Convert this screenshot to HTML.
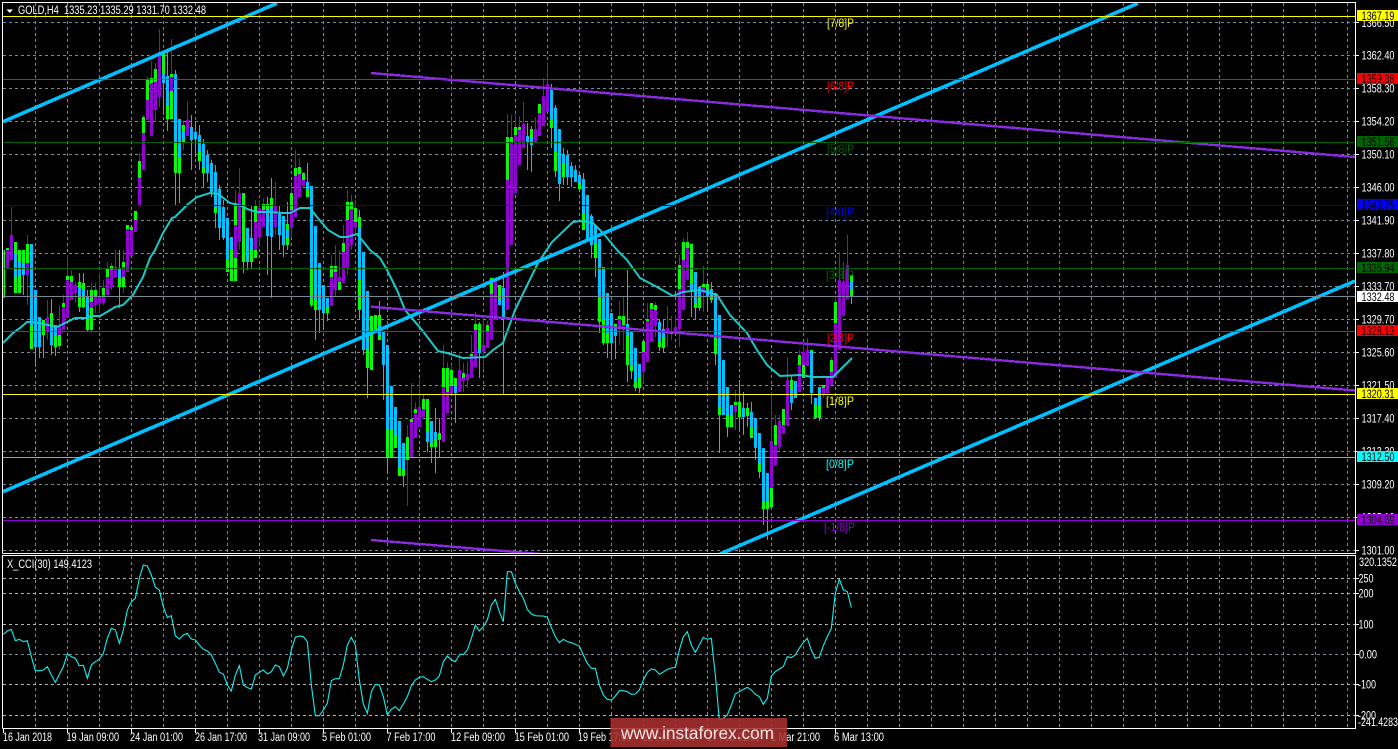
<!DOCTYPE html>
<html>
<head>
<meta charset="utf-8">
<title>GOLD,H4</title>
<style>
html,body{margin:0;padding:0;background:#000;width:1398px;height:749px;overflow:hidden}
svg{display:block}
text{font-family:"Liberation Sans",sans-serif;font-size:11.5px;fill:#fff}
.b text{fill:#000}
</style>
</head>
<body>
<svg width="1398" height="749" viewBox="0 0 1398 749" xmlns="http://www.w3.org/2000/svg">
<defs>
<clipPath id="m"><rect x="3" y="3" width="1352" height="550"/></clipPath>
</defs>
<rect width="1398" height="749" fill="#000"/>

<!-- grid main -->
<g shape-rendering="crispEdges" fill="none" stroke="#778899" stroke-width="1" stroke-dasharray="3 3">
<path d="M3 22.5H1355M3 55.5H1355M3 88.5H1355M3 121.5H1355M3 154.5H1355M3 187.5H1355M3 220.5H1355M3 253.5H1355M3 286.5H1355M3 319.5H1355M3 352.5H1355M3 385.5H1355M3 418.5H1355M3 451.5H1355M3 484.5H1355M3 517.5H1355M3 550.5H1355"/>
<path id="vg" d="M35.5 3V553M67.5 3V553M99.5 3V553M131.5 3V553M163.5 3V553M195.5 3V553M227.5 3V553M259.5 3V553M291.5 3V553M323.5 3V553M355.5 3V553M387.5 3V553M419.5 3V553M451.5 3V553M483.5 3V553M515.5 3V553M547.5 3V553M579.5 3V553M611.5 3V553M643.5 3V553M675.5 3V553M707.5 3V553M739.5 3V553M771.5 3V553M803.5 3V553M835.5 3V553M867.5 3V553M899.5 3V553M931.5 3V553M963.5 3V553M995.5 3V553M1027.5 3V553M1059.5 3V553M1091.5 3V553M1123.5 3V553M1155.5 3V553M1187.5 3V553M1219.5 3V553M1251.5 3V553M1283.5 3V553M1315.5 3V553M1347.5 3V553"/>
<path d="M35.5 556V728M67.5 556V728M99.5 556V728M131.5 556V728M163.5 556V728M195.5 556V728M227.5 556V728M259.5 556V728M291.5 556V728M323.5 556V728M355.5 556V728M387.5 556V728M419.5 556V728M451.5 556V728M483.5 556V728M515.5 556V728M547.5 556V728M579.5 556V728M611.5 556V728M643.5 556V728M675.5 556V728M707.5 556V728M739.5 556V728M771.5 556V728M803.5 556V728M835.5 556V728M867.5 556V728M899.5 556V728M931.5 556V728M963.5 556V728M995.5 556V728M1027.5 556V728M1059.5 556V728M1091.5 556V728M1123.5 556V728M1155.5 556V728M1187.5 556V728M1219.5 556V728M1251.5 556V728M1283.5 556V728M1315.5 556V728M1347.5 556V728"/>
<path d="M3 654.5H1355"/>
<path stroke="#b4b4b4" d="M3 578.5H1355M3 593.5H1355M3 624.5H1355M3 684.5H1355M3 715.5H1355"/>
</g>

<!-- candles -->
<g clip-path="url(#m)" transform="translate(.5 0)" fill="none" shape-rendering="crispEdges">
<path stroke="#9400D3" d="M11 207V260M27 235V305M47 300V340M59 305V350M63 295V330M67 255V318M71 270V300M75 282V303M91 283V333M95 283V313M99 273V313M103 280V305M107 262V295M111 263V290M115 250V277M123 250V293M127 225V250M139 153V205M143 115V170M147 77V120M151 61V136M155 63V122M159 29V107M171 39V119M183 122V150M187 101V136M235 190V281M239 168V250M255 200V258M259 200V245M263 198V227M275 182V235M291 188V238M295 150V217M299 158V197M303 172V186M331 255V306M335 245V297M339 250V290M343 225V283M347 190V275M351 195V250M355 200V235M407 425V506M411 383V457M415 402V438M419 379V427M423 395V417M443 345V442M447 362V413M451 365V393M459 352V392M463 363V392M467 361V388M471 335V378M475 312V367M483 320V370M487 321V348M507 114V310M511 115V245M515 115V193M519 116V165M523 102V148M535 117V142M539 105V136M543 78V126M547 63V112M619 301V345M623 296V351M643 341V383M647 303V362M651 303V342M655 302V337M667 306V347M671 316V340M675 315V334M679 255V347M683 238V310M687 232V280M703 266V312M735 390V430M771 392V507M775 415V465M779 415V450M787 357V426M799 350V392M803 345V378M807 338V366M823 385V398M831 357V385M835 296V378M839 252V350M843 262V316M847 235V299"/>
<path stroke="#00BFFF" d="M23 250V295M35 290V367M39 317V358M43 320V358M51 299V355M55 325V356M79 273V312M83 273V308M87 290V332M119 250V308M163 53V115M167 50V131M175 70V205M179 119V203M191 115V170M195 122V157M199 125V170M203 139V188M207 150V182M211 160V197M215 165V228M219 185V240M223 200V240M243 193V273M247 228V270M251 205V268M267 197V275M271 178V298M279 205V250M283 216V257M287 202V250M307 163V197M311 186V307M315 226V340M319 263V333M323 285V330M327 298V321M359 210V320M363 252V355M367 291V398M379 301V340M383 332V400M387 345V473M403 443V487M427 399V452M431 421V463M435 408V473M439 418V457M455 378V423M479 322V378M503 272V394M527 123V170M531 126V172M551 84V148M555 105V177M559 129V201M563 148V185M567 150V185M571 162V187M575 165V182M579 172V192M583 173V230M591 214V258M595 225V277M599 239V333M603 267V345M607 293V358M611 313V359M615 324V359M627 270V382M631 332V379M635 348V391M639 364V393M659 320V351M663 320V353M691 244V317M695 272V319M699 287V311M707 281V310M711 282V303M715 293V365M719 315V453M727 387V437M739 380V430M743 392V435M747 403V427M751 402V438M755 418V460M759 433V478M763 448V525M767 473V540M791 376V410M811 350V404M819 387V421M851 275V304"/>
<path stroke="#00FF00" stroke-width="3" d="M3 250V298M7 248V250M15 242V293M19 250V293M23 250V275M27 244V263M31 244V349M43 320V335M51 313V345M55 335V347M59 335V346M63 303V307M67 276V280M71 276V282M79 282V307M83 283V307M87 318V330M91 290V330M95 290V305M99 297V302M103 288V295M107 268V277M111 266V270M119 278V287M123 262V287M127 225V229M131 227V230M135 211V220M139 161V178M143 117V133M147 80V100M151 78V83M155 69V82M163 53V73M167 105V119M171 74V77M171 91V119M175 143V173M179 158V173M183 125V142M199 152V161M203 167V173M215 207V213M227 260V272M231 250V281M235 203V225M235 258V281M243 193V262M251 250V262M255 206V222M255 250V258M263 204V210M267 204V210M271 198V208M287 224V245M291 193V210M295 168V176M299 167V174M303 173V180M307 189V197M311 267V305M315 300V310M327 308V313M331 266V277M335 266V272M339 282V290M343 243V252M347 202V220M351 202V209M355 208V222M359 217V227M359 280V310M367 350V368M371 316V370M375 315V330M379 315V340M387 429V457M391 429V457M395 435V448M399 467V476M403 470V476M407 437V460M411 419V422M415 409V413M423 399V409M427 399V432M431 443V447M435 440V447M439 433V440M443 368V387M447 368V392M451 370V386M455 378V393M463 373V378M471 354V356M475 324V330M479 324V349M487 325V332M491 278V294M499 285V300M507 137V180M511 137V143M515 127V135M519 127V130M531 129V138M539 104V113M551 120V128M555 152V171M563 163V177M579 183V189M583 213V230M595 243V258M599 296V322M603 320V343M607 334V343M615 324V327M619 316V319M623 316V325M627 335V365M631 366V371M635 382V388M639 378V388M643 341V352M647 319V321M651 303V309M655 305V310M659 342V347M663 329V348M671 331V334M679 265V289M683 242V260M687 242V248M691 244V283M695 303V308M699 298V308M703 284V287M707 284V290M711 295V300M715 337V354M719 407V415M727 415V427M731 415V427M735 402V405M739 402V417M747 408V416M751 428V438M759 463V472M763 501V509M767 501V509M771 488V507M775 425V445M783 409V425M791 380V390M799 355V365M803 352V378M811 350V352M815 405V418M819 405V418M823 385V388M831 360V372M835 302V323M851 275V297"/>
<path stroke="#9400D3" stroke-width="3" d="M7 250V268M11 235V260M27 263V275M47 317V332M59 325V335M63 307V330M67 280V318M71 282V300M75 285V293M91 302V308M95 297V305M99 297V303M103 295V303M107 277V295M111 270V287M115 267V277M123 267V277M127 229V272M131 230V256M135 220V232M139 178V205M143 133V170M147 100V120M151 83V136M155 82V110M159 52V97M171 77V91M187 120V136M235 225V258M239 193V242M255 222V250M259 208V237M263 210V227M275 206V227M291 210V228M295 176V217M299 174V197M303 180V186M331 277V306M335 272V290M339 277V282M343 252V283M347 220V268M351 209V245M355 222V228M375 329V332M411 422V457M415 413V438M419 407V427M423 409V417M443 387V442M447 392V413M451 386V393M459 370V392M463 378V381M467 374V380M471 356V378M475 330V367M483 345V352M487 332V348M491 294V340M495 278V320M507 180V310M511 143V245M515 135V193M519 130V165M523 124V148M535 129V142M539 113V136M543 96V126M547 84V112M619 319V328M623 325V330M643 352V372M647 321V362M651 309V342M655 310V326M667 328V334M675 327V332M679 289V329M683 260V310M687 248V280M703 287V293M735 405V412M771 441V488M775 445V465M779 421V447M783 425V434M787 380V426M799 365V392M803 352V365M807 350V366M823 388V395M827 377V393M831 372V385M835 323V378M839 280V350M843 282V316M847 265V299"/>
<path stroke="#00BFFF" stroke-width="3" d="M15 253V277M19 262V275M23 263V275M31 244V325M35 290V347M39 317V347M51 325V345M55 325V335M79 288V298M83 290V295M87 297V318M119 268V278M163 73V83M167 76V105M175 74V143M179 119V158M183 132V140M191 127V140M195 132V139M199 135V152M203 144V167M207 155V173M211 163V192M215 172V207M219 189V228M223 207V238M227 218V260M231 237V250M247 228V262M251 238V250M267 210V236M271 208V237M279 214V235M283 216V245M287 229V238M307 182V189M311 186V267M315 226V300M319 263V310M323 285V313M327 298V308M359 227V280M363 252V350M367 291V350M379 325V335M383 332V365M387 345V429M391 386V429M395 407V435M399 421V467M403 443V470M427 432V442M431 421V443M435 432V440M455 386V393M479 349V353M499 300V305M503 288V317M527 136V142M531 138V145M551 90V120M555 108V152M559 129V184M563 154V163M567 155V177M571 166V177M575 170V182M579 175V183M583 179V213M587 195V240M591 216V245M595 225V243M599 239V296M603 267V320M607 293V334M611 313V343M615 327V336M627 324V335M631 332V366M635 348V382M639 364V378M659 322V342M663 329V337M691 283V290M695 272V303M699 287V298M707 290V296M711 289V295M715 293V337M719 315V407M723 360V415M727 387V415M731 405V415M743 408V417M751 412V428M755 418V448M759 433V463M763 448V501M767 473V501M791 390V403M795 381V398M811 352V393M815 398V405M819 387V405M851 282V290"/>
</g>

<!-- MA, trend and channels -->
<g clip-path="url(#m)" fill="none">
<path stroke="#1cc8c8" stroke-width="2" d="M3 343L8 338L13 333L20 328L27 322L32 322L43 324L57 327L67 322L75 318L87 318L92 316L100 316L107 312L115 307L123 305L133 295L143 277L150 258L155 250L163 233L172 218L175 217L187 205L197 197L210 193L218 194L230 203L242 206L247 209L257 212L270 212L283 213L290 213L300 208L310 208L317 217L328 230L340 237L347 237L357 234L362 240L370 250L380 258L387 270L397 290L405 310L422 330L438 351L447 353L463 358L485 357L493 350L503 343L515 310L538 263L552 242L573 222L580 221L593 223L603 233L617 250L627 260L640 278L657 287L673 296L683 292L700 290L717 295L730 315L747 333L757 350L767 365L780 376L800 375L813 377L833 377L840 370L852 358"/>
<g shape-rendering="crispEdges">
<path stroke="#00BFFF" stroke-width="3.6" d="M3 121.7L277 3.2M3 491.7L1138 3.2M720 554L1355 281"/>
<path stroke="#8A2BE2" stroke-width="2.4" d="M371 73L1355 157M371 306.7L1355 390.5M371 540L540 554"/>
</g>
</g>

<!-- level lines -->
<g shape-rendering="crispEdges" stroke-width="1" fill="none">
<path stroke="#FFFF00" d="M3 16.5H1355M3 394.5H1355"/>
<path stroke="#E01010" d="M3 79.5H1355M3 331.5H1355"/>
<path stroke="#006400" d="M3 142.5H1355M3 268.5H1355"/>
<path stroke="#0000CD" d="M3 205.5H1355"/>
<path stroke="#778899" d="M3 296.5H1355"/>
<path stroke="#00E8E8" d="M3 457.5H1355"/>
<path stroke="#9400D3" d="M3 520.5H1355"/>
</g>

<!-- Murrey labels -->
<text x="827" y="27" textLength="27" lengthAdjust="spacingAndGlyphs" style="fill:#FFFF00;font-size:12px">[7/8]P</text>
<text x="827" y="90" textLength="27" lengthAdjust="spacingAndGlyphs" style="fill:#FF0000;font-size:12px">[6/8]P</text>
<text x="827" y="153" textLength="27" lengthAdjust="spacingAndGlyphs" style="fill:#006400;font-size:12px">[5/8]P</text>
<text x="826" y="216" textLength="28" lengthAdjust="spacingAndGlyphs" style="fill:#0000FF;font-size:12px">[4/8]P</text>
<text x="826" y="279" textLength="28" lengthAdjust="spacingAndGlyphs" style="fill:#006400;font-size:12px">[3/8]P</text>
<text x="827" y="342" textLength="27" lengthAdjust="spacingAndGlyphs" style="fill:#FF0000;font-size:12px">[2/8]P</text>
<text x="826" y="405" textLength="28" lengthAdjust="spacingAndGlyphs" style="fill:#FFFF00;font-size:12px">[1/8]P</text>
<text x="826" y="468" textLength="28" lengthAdjust="spacingAndGlyphs" style="fill:#00FFFF;font-size:12px">[0/8]P</text>
<text x="824" y="531" textLength="31" lengthAdjust="spacingAndGlyphs" style="fill:#9400D3;font-size:12px">[-1/8]P</text>

<!-- CCI line -->
<g fill="none" stroke="#10f0f0" stroke-width="1.1">
<path transform="translate(0 550) scale(.33333)" vector-effect="non-scaling-stroke" d="M10 253L22 243L34 238L46 272L58 268L70 275L82 272L94 320L106 362L118 362L130 360L142 350L154 375L166 397L178 373L190 350L202 312L214 320L226 325L238 347L250 346L262 385L274 345L286 335L298 328L310 310L322 265L334 235L346 240L358 280L370 240L382 180L394 155L406 145L418 85L430 45L442 48L454 75L466 112L478 120L490 170L502 203L514 197L526 257L538 267L550 255L562 250L574 267L586 270L598 285L610 298L622 303L634 315L646 340L658 367L670 372L682 405L694 423L706 375L718 347L730 405L742 413L754 417L766 375L778 367L790 360L802 372L814 365L826 345L838 350L850 378L862 355L874 300L886 262L898 258L910 260L922 275L934 405L946 497L958 497L970 480L982 460L994 392L1006 386L1018 386L1030 345L1042 285L1054 262L1066 285L1078 390L1090 462L1102 490L1114 425L1126 403L1138 405L1150 440L1162 495L1174 478L1186 470L1198 482L1210 462L1222 440L1234 407L1246 390L1258 382L1270 380L1282 388L1294 395L1306 390L1318 378L1330 335L1342 318L1354 330L1366 335L1380 312"/>
<path transform="translate(460 550) scale(.33333)" vector-effect="non-scaling-stroke" d="M0 312L10 314L22 300L34 265L46 225L58 243L70 230L82 210L94 165L106 148L118 185L130 215L142 65L154 65L166 100L178 125L190 145L202 178L214 192L226 197L238 198L250 198L262 202L274 232L286 260L298 278L310 268L322 275L334 278L346 283L358 288L370 315L382 340L394 355L406 355L418 405L430 435L442 448L454 450L466 438L478 422L490 422L502 425L514 433L526 432L538 420L550 390L562 367L574 357L586 360L598 373L610 366L622 358L634 354L646 352L658 300L670 260L682 245L694 285L706 307L718 285L730 262L742 268L754 265L766 375L778 510L790 505L802 495L814 465L826 432L838 425L850 418L862 412L874 420L886 433L898 440L910 463L922 445L934 378L946 365L958 357L970 350L982 320L994 323L1006 315L1018 295L1030 277L1042 265L1054 300L1066 325L1078 322L1090 287L1102 260L1114 235L1126 130L1138 87L1150 120L1162 125L1174 173"/>
</g>

<!-- frames and ticks -->
<g shape-rendering="crispEdges" fill="none" stroke="#fff" stroke-width="1">
<path d="M2.5 553.5V2.5H1355.5V553.5H2.5"/>
<path d="M2.5 728.5V555.5H1355.5V728.5H2.5"/>
<path d="M1355 22.5h4M1355 55.5h4M1355 88.5h4M1355 121.5h4M1355 154.5h4M1355 187.5h4M1355 220.5h4M1355 253.5h4M1355 286.5h4M1355 319.5h4M1355 352.5h4M1355 385.5h4M1355 418.5h4M1355 451.5h4M1355 484.5h4M1355 517.5h4M1355 550.5h4M1355 578.5h4M1355 593.5h4M1355 624.5h4M1355 654.5h4M1355 684.5h4M1355 715.5h4"/>
<path d="M3.5 728V733M67.5 728V733M131.5 728V733M195.5 728V733M259.5 728V733M323.5 728V733M387.5 728V733M451.5 728V733M515.5 728V733M579.5 728V733M643.5 728V733M707.5 728V733M771.5 728V733M835.5 728V733"/>
</g>

<!-- title -->
<path d="M6.5 9.5H13L9.75 13Z" fill="#fff"/>
<text x="18" y="14" textLength="188" lengthAdjust="spacingAndGlyphs" xml:space="preserve">GOLD,H4  1335.23 1335.29 1331.70 1332.48</text>
<text x="7" y="568" textLength="85" lengthAdjust="spacingAndGlyphs">X_CCI(30) 149.4123</text>

<!-- price axis -->
<g>
<text x="1361.5" y="27" textLength="33" lengthAdjust="spacingAndGlyphs">1366.50</text>
<text x="1361.5" y="59.5" textLength="33" lengthAdjust="spacingAndGlyphs">1362.40</text>
<text x="1361.5" y="92.5" textLength="33" lengthAdjust="spacingAndGlyphs">1358.30</text>
<text x="1361.5" y="125.5" textLength="33" lengthAdjust="spacingAndGlyphs">1354.20</text>
<text x="1361.5" y="158.5" textLength="33" lengthAdjust="spacingAndGlyphs">1350.10</text>
<text x="1361.5" y="191.5" textLength="33" lengthAdjust="spacingAndGlyphs">1346.00</text>
<text x="1361.5" y="224.5" textLength="33" lengthAdjust="spacingAndGlyphs">1341.90</text>
<text x="1361.5" y="257.5" textLength="33" lengthAdjust="spacingAndGlyphs">1337.80</text>
<text x="1361.5" y="290.5" textLength="33" lengthAdjust="spacingAndGlyphs">1333.70</text>
<text x="1361.5" y="323.5" textLength="33" lengthAdjust="spacingAndGlyphs">1329.70</text>
<text x="1361.5" y="356.5" textLength="33" lengthAdjust="spacingAndGlyphs">1325.60</text>
<text x="1361.5" y="389.5" textLength="33" lengthAdjust="spacingAndGlyphs">1321.50</text>
<text x="1361.5" y="422.5" textLength="33" lengthAdjust="spacingAndGlyphs">1317.40</text>
<text x="1361.5" y="455.5" textLength="33" lengthAdjust="spacingAndGlyphs">1313.30</text>
<text x="1361.5" y="488.5" textLength="33" lengthAdjust="spacingAndGlyphs">1309.20</text>
<text x="1361.5" y="521.5" textLength="33" lengthAdjust="spacingAndGlyphs">1305.10</text>
<text x="1361.5" y="554.5" textLength="33" lengthAdjust="spacingAndGlyphs">1301.00</text>
</g>
<g class="b" shape-rendering="crispEdges">
<rect x="1357" y="10" width="41" height="11" fill="#FFFF00"/>
<rect x="1357" y="73" width="41" height="11" fill="#FF0000"/>
<rect x="1357" y="136" width="41" height="11" fill="#006400"/>
<rect x="1357" y="199" width="41" height="11" fill="#0000FF"/>
<rect x="1357" y="262" width="41" height="11" fill="#006400"/>
<rect x="1357" y="291" width="41" height="11" fill="#FFFFFF"/>
<rect x="1357" y="325" width="41" height="11" fill="#FF0000"/>
<rect x="1357" y="388" width="41" height="11" fill="#FFFF00"/>
<rect x="1357" y="451" width="41" height="11" fill="#00FFFF"/>
<rect x="1357" y="514" width="41" height="11" fill="#9400D3"/>
<text x="1361.5" y="20" textLength="33" lengthAdjust="spacingAndGlyphs">1367.19</text>
<text x="1361.5" y="83" textLength="33" lengthAdjust="spacingAndGlyphs">1359.38</text>
<text x="1361.5" y="146" textLength="33" lengthAdjust="spacingAndGlyphs">1351.56</text>
<text x="1361.5" y="209" textLength="33" lengthAdjust="spacingAndGlyphs">1343.75</text>
<text x="1361.5" y="272" textLength="33" lengthAdjust="spacingAndGlyphs">1335.94</text>
<text x="1361.5" y="301" textLength="33" lengthAdjust="spacingAndGlyphs">1332.48</text>
<text x="1361.5" y="335" textLength="33" lengthAdjust="spacingAndGlyphs">1328.13</text>
<text x="1361.5" y="398" textLength="33" lengthAdjust="spacingAndGlyphs">1320.31</text>
<text x="1361.5" y="461" textLength="33" lengthAdjust="spacingAndGlyphs">1312.50</text>
<text x="1361.5" y="524" textLength="33" lengthAdjust="spacingAndGlyphs">1304.69</text>
</g>

<!-- CCI axis -->
<text x="1359" y="566" textLength="38" lengthAdjust="spacingAndGlyphs">320.1352</text>
<text x="1358.5" y="582.5" textLength="15" lengthAdjust="spacingAndGlyphs">250</text>
<text x="1358.5" y="597.5" textLength="15" lengthAdjust="spacingAndGlyphs">200</text>
<text x="1358.5" y="628.5" textLength="15" lengthAdjust="spacingAndGlyphs">100</text>
<text x="1359" y="658.5" textLength="18" lengthAdjust="spacingAndGlyphs">0.00</text>
<text x="1358" y="688.5" textLength="18" lengthAdjust="spacingAndGlyphs">-100</text>
<text x="1358" y="719.5" textLength="18" lengthAdjust="spacingAndGlyphs">-200</text>
<text x="1358" y="726" textLength="40" lengthAdjust="spacingAndGlyphs">-241.4283</text>

<!-- time axis -->
<text x="3" y="741" textLength="49" lengthAdjust="spacingAndGlyphs">16 Jan 2018</text>
<text x="66.5" y="741" textLength="52.5" lengthAdjust="spacingAndGlyphs">19 Jan 09:00</text>
<text x="130" y="741" textLength="53" lengthAdjust="spacingAndGlyphs">24 Jan 01:00</text>
<text x="195" y="741" textLength="52" lengthAdjust="spacingAndGlyphs">26 Jan 17:00</text>
<text x="258" y="741" textLength="52" lengthAdjust="spacingAndGlyphs">31 Jan 09:00</text>
<text x="322" y="741" textLength="49" lengthAdjust="spacingAndGlyphs">5 Feb 01:00</text>
<text x="386.5" y="741" textLength="49" lengthAdjust="spacingAndGlyphs">7 Feb 17:00</text>
<text x="451" y="741" textLength="54" lengthAdjust="spacingAndGlyphs">12 Feb 09:00</text>
<text x="514.5" y="741" textLength="54.5" lengthAdjust="spacingAndGlyphs">15 Feb 01:00</text>
<text x="578" y="741" textLength="53" lengthAdjust="spacingAndGlyphs">19 Feb 17:00</text>
<text x="643" y="741" textLength="53" lengthAdjust="spacingAndGlyphs">22 Feb 09:00</text>
<text x="707" y="741" textLength="53" lengthAdjust="spacingAndGlyphs">27 Feb 01:00</text>
<text x="771" y="741" textLength="49" lengthAdjust="spacingAndGlyphs">1 Mar 21:00</text>
<text x="834" y="741" textLength="50" lengthAdjust="spacingAndGlyphs">6 Mar 13:00</text>

<!-- watermark -->
<rect x="610.5" y="718" width="176.5" height="29" fill="#a83030" fill-opacity=".88" shape-rendering="crispEdges"/>
<text x="621" y="739" textLength="153" lengthAdjust="spacingAndGlyphs" style="font-size:17.5px;fill:#f5e6e6">www.instaforex.com</text>
</svg>
</body>
</html>
